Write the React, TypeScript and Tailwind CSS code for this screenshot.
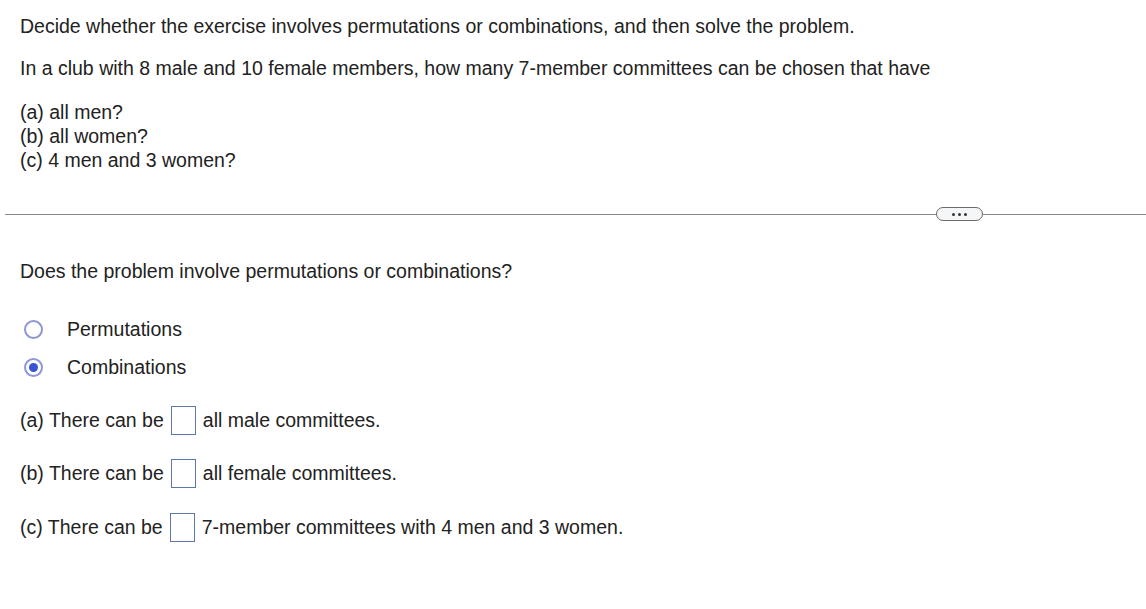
export default function App() {
  const rows = [
    { label: "(a) There can be", tail: "all male committees." },
    { label: "(b) There can be", tail: "all female committees." },
    { label: "(c) There can be", tail: "7-member committees with 4 men and 3 women." },
  ];

  return (
    <div className="min-h-[609px] w-[1146px] bg-white text-[19.5px] text-[#222] font-['Liberation_Sans',Arial,sans-serif]">
      <div className="px-5 pt-[14px]">
        <p className="leading-6">
          Decide whether the exercise involves permutations or combinations, and then solve the problem.
        </p>
        <p className="mt-[18px] leading-6">
          In a club with 8 male and 10 female members, how many 7-member committees can be chosen that have
        </p>
        <div className="mt-[20px] leading-6">
          <p>(a) all men?</p>
          <p>(b) all women?</p>
          <p>(c) 4 men and 3 women?</p>
        </div>
      </div>

      <div className="mt-[35px] ml-[5px] flex items-center">
        <div className="h-px flex-1 bg-[#8a8a8a]" />
        <button className="flex h-[14px] w-[47px] items-center justify-center gap-[3px] rounded-full border border-[#6b6b6b] bg-[#f5f6f8]">
          <span className="h-[3px] w-[3px] rounded-full bg-[#333]" />
          <span className="h-[3px] w-[3px] rounded-full bg-[#333]" />
          <span className="h-[3px] w-[3px] rounded-full bg-[#333]" />
        </button>
        <div className="h-px w-[163px] bg-[#8a8a8a]" />
      </div>

      <div className="px-5">
        <p className="mt-[38px] leading-6">Does the problem involve permutations or combinations?</p>

        <div className="mt-[34px] flex flex-col gap-[14px]">
          <label className="flex items-center leading-6">
            <span className="ml-[4px] h-[19px] w-[19px] rounded-full border-2 border-[#8d97d6]" />
            <span className="ml-[24px]">Permutations</span>
          </label>
          <label className="flex items-center leading-6">
            <span className="ml-[4px] flex h-[19px] w-[19px] items-center justify-center rounded-full border-2 border-[#8d97d6]">
              <span className="h-[9px] w-[9px] rounded-full bg-[#3a55d1]" />
            </span>
            <span className="ml-[24px]">Combinations</span>
          </label>
        </div>

        <div className="mt-[27px] flex flex-col gap-[24px]">
          {rows.map((row) => (
            <div key={row.label} className="flex items-center">
              <span>{row.label}</span>
              <span className="ml-[7px] h-[29px] w-[25px] border border-[#5b78ad]" />
              <span className="ml-[7px]">{row.tail}</span>
            </div>
          ))}
        </div>
      </div>
    </div>
  );
}
